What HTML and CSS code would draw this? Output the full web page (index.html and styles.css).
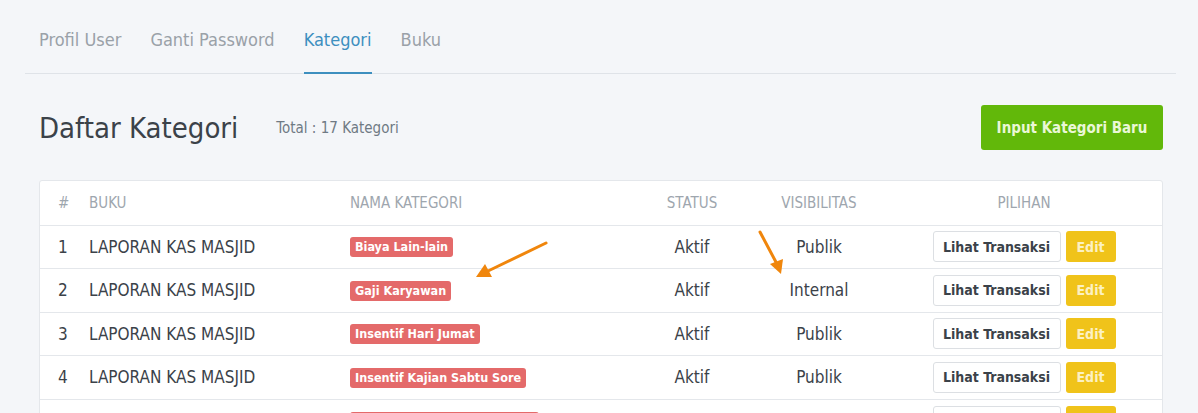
FILE: index.html
```html
<!DOCTYPE html>
<html lang="id">
<head>
<meta charset="utf-8">
<title>Daftar Kategori</title>
<link rel="stylesheet" href="styles.css">
</head>
<body>
<div class="page">
  <nav class="tabs">
    <a class="tab">Profil User</a>
    <a class="tab">Ganti Password</a>
    <a class="tab active">Kategori</a>
    <a class="tab">Buku</a>
  </nav>
  <section class="content">
    <header class="head">
      <h1 class="title">Daftar Kategori</h1>
      <span class="total">Total : 17 Kategori</span>
      <button class="btn-new">Input Kategori Baru</button>
    </header>
    <div class="card">
      <table class="grid">
        <colgroup>
          <col class="c1"><col class="c2"><col class="c3"><col class="c4"><col class="c5"><col class="c6">
        </colgroup>
        <thead>
          <tr><th>#</th><th>BUKU</th><th>NAMA KATEGORI</th><th class="ctr">STATUS</th><th class="ctr">VISIBILITAS</th><th class="ctr">PILIHAN</th></tr>
        </thead>
        <tbody>
          <tr><td>1</td><td>LAPORAN KAS MASJID</td><td><span class="badge">Biaya Lain-lain</span></td><td class="ctr">Aktif</td><td class="ctr">Publik</td><td class="ctr"><span class="actions"><button class="btn-view">Lihat Transaksi</button><button class="btn-edit">Edit</button></span></td></tr>
          <tr><td>2</td><td>LAPORAN KAS MASJID</td><td><span class="badge">Gaji Karyawan</span></td><td class="ctr">Aktif</td><td class="ctr">Internal</td><td class="ctr"><span class="actions"><button class="btn-view">Lihat Transaksi</button><button class="btn-edit">Edit</button></span></td></tr>
          <tr><td>3</td><td>LAPORAN KAS MASJID</td><td><span class="badge">Insentif Hari Jumat</span></td><td class="ctr">Aktif</td><td class="ctr">Publik</td><td class="ctr"><span class="actions"><button class="btn-view">Lihat Transaksi</button><button class="btn-edit">Edit</button></span></td></tr>
          <tr><td>4</td><td>LAPORAN KAS MASJID</td><td><span class="badge">Insentif Kajian Sabtu Sore</span></td><td class="ctr">Aktif</td><td class="ctr">Publik</td><td class="ctr"><span class="actions"><button class="btn-view">Lihat Transaksi</button><button class="btn-edit">Edit</button></span></td></tr>
          <tr><td>5</td><td>LAPORAN KAS MASJID</td><td><span class="badge">Insentif Kajian Malam Jumat</span></td><td class="ctr">Aktif</td><td class="ctr">Publik</td><td class="ctr"><span class="actions"><button class="btn-view">Lihat Transaksi</button><button class="btn-edit">Edit</button></span></td></tr>
        </tbody>
      </table>
    </div>
  </section>
  <svg class="annot" width="1198" height="413" viewBox="0 0 1198 413" aria-hidden="true">
    <g stroke="#f0860c" stroke-width="3" stroke-linecap="round">
      <line x1="546" y1="243" x2="486" y2="272"/>
      <line x1="760" y1="232" x2="777" y2="264"/>
    </g>
    <g fill="#f0860c">
      <polygon points="476,277 485,264 492,277"/>
      <polygon points="781,274 770,264 783,259"/>
    </g>
  </svg>
</div>
</body>
</html>
```
FILE: styles.css
```css
* { box-sizing: border-box; }
html, body { margin: 0; padding: 0; }
body {
  background: #f4f6f9;
  font-family: "DejaVu Sans Condensed", "DejaVu Sans", sans-serif;
  font-stretch: condensed;
  color: #3b4249;
  width: 1198px;
  height: 413px;
  overflow: hidden;
}
.page { position: relative; padding: 0 22px 0 25px; }
.tabs {
  display: flex;
  gap: 29px;
  padding: 20px 14px 0;
  border-bottom: 1px solid #dfe3e8;
}
.tab {
  font-size: 18px;
  line-height: 40px;
  padding-bottom: 12px;
  color: #9aa1a8;
  border-bottom: 2px solid transparent;
  margin-bottom: -1px;
}
.tab.active { color: #3d8fbf; border-bottom-color: #3d8fbf; }
.content { padding: 0 13px 0 14px; }
.head {
  display: flex;
  align-items: center;
  height: 45px;
  margin-top: 31px;
}
.title {
  margin: 0;
  font-size: 29px;
  font-weight: normal;
  color: #3b4249;
}
.total { margin-left: 38px; font-size: 15px; color: #6f7a84; }
.btn-new {
  margin-left: auto;
  width: 182px;
  height: 45px;
  border: 0;
  border-radius: 3px;
  background: #62b80a;
  color: #eaf7d6;
  font: bold 15px "DejaVu Sans Condensed", "DejaVu Sans", sans-serif;
  font-stretch: condensed;
}
.card {
  margin-top: 30px;
  background: #fff;
  border: 1px solid #e4e7eb;
  border-radius: 3px;
}
.grid { width: 100%; border-collapse: collapse; table-layout: fixed; }
.c1 { width: 31px; } .c2 { width: 261px; } .c3 { width: 300px; }
.c4 { width: 120px; } .c5 { width: 134px; } .c6 { width: 276px; }
.grid th {
  height: 44px;
  text-align: left;
  font-weight: normal;
  font-size: 15px;
  color: #9ea6ae;
  padding: 0 0 0 18px;
}
.grid td {
  height: 43.5px;
  border-top: 1px solid #e4e7eb;
  font-size: 17px;
  color: #3b4249;
  padding: 0 0 0 18px;
  white-space: nowrap;
  overflow: hidden;
}
.grid .ctr { text-align: center; padding-left: 0; }
.badge {
  display: inline-block;
  background: #e46a6a;
  color: #fff;
  font-size: 12.5px;
  font-weight: bold;
  line-height: 20px;
  padding: 0 5px;
  border-radius: 3px;
  vertical-align: middle;
}
.actions { display: inline-flex; gap: 5px; vertical-align: middle; }
.btn-view, .btn-edit {
  height: 31px;
  border-radius: 3px;
  font: bold 14px "DejaVu Sans Condensed", "DejaVu Sans", sans-serif;
  font-stretch: condensed;
  padding: 0;
}
.btn-view { width: 128px; background: #fff; border: 1px solid #dcdfe3; color: #3b4249; }
.btn-edit { width: 50px; background: #f0c31a; border: 0; color: #fcf1c2; }
.annot { position: absolute; left: 0; top: 0; pointer-events: none; }
```
